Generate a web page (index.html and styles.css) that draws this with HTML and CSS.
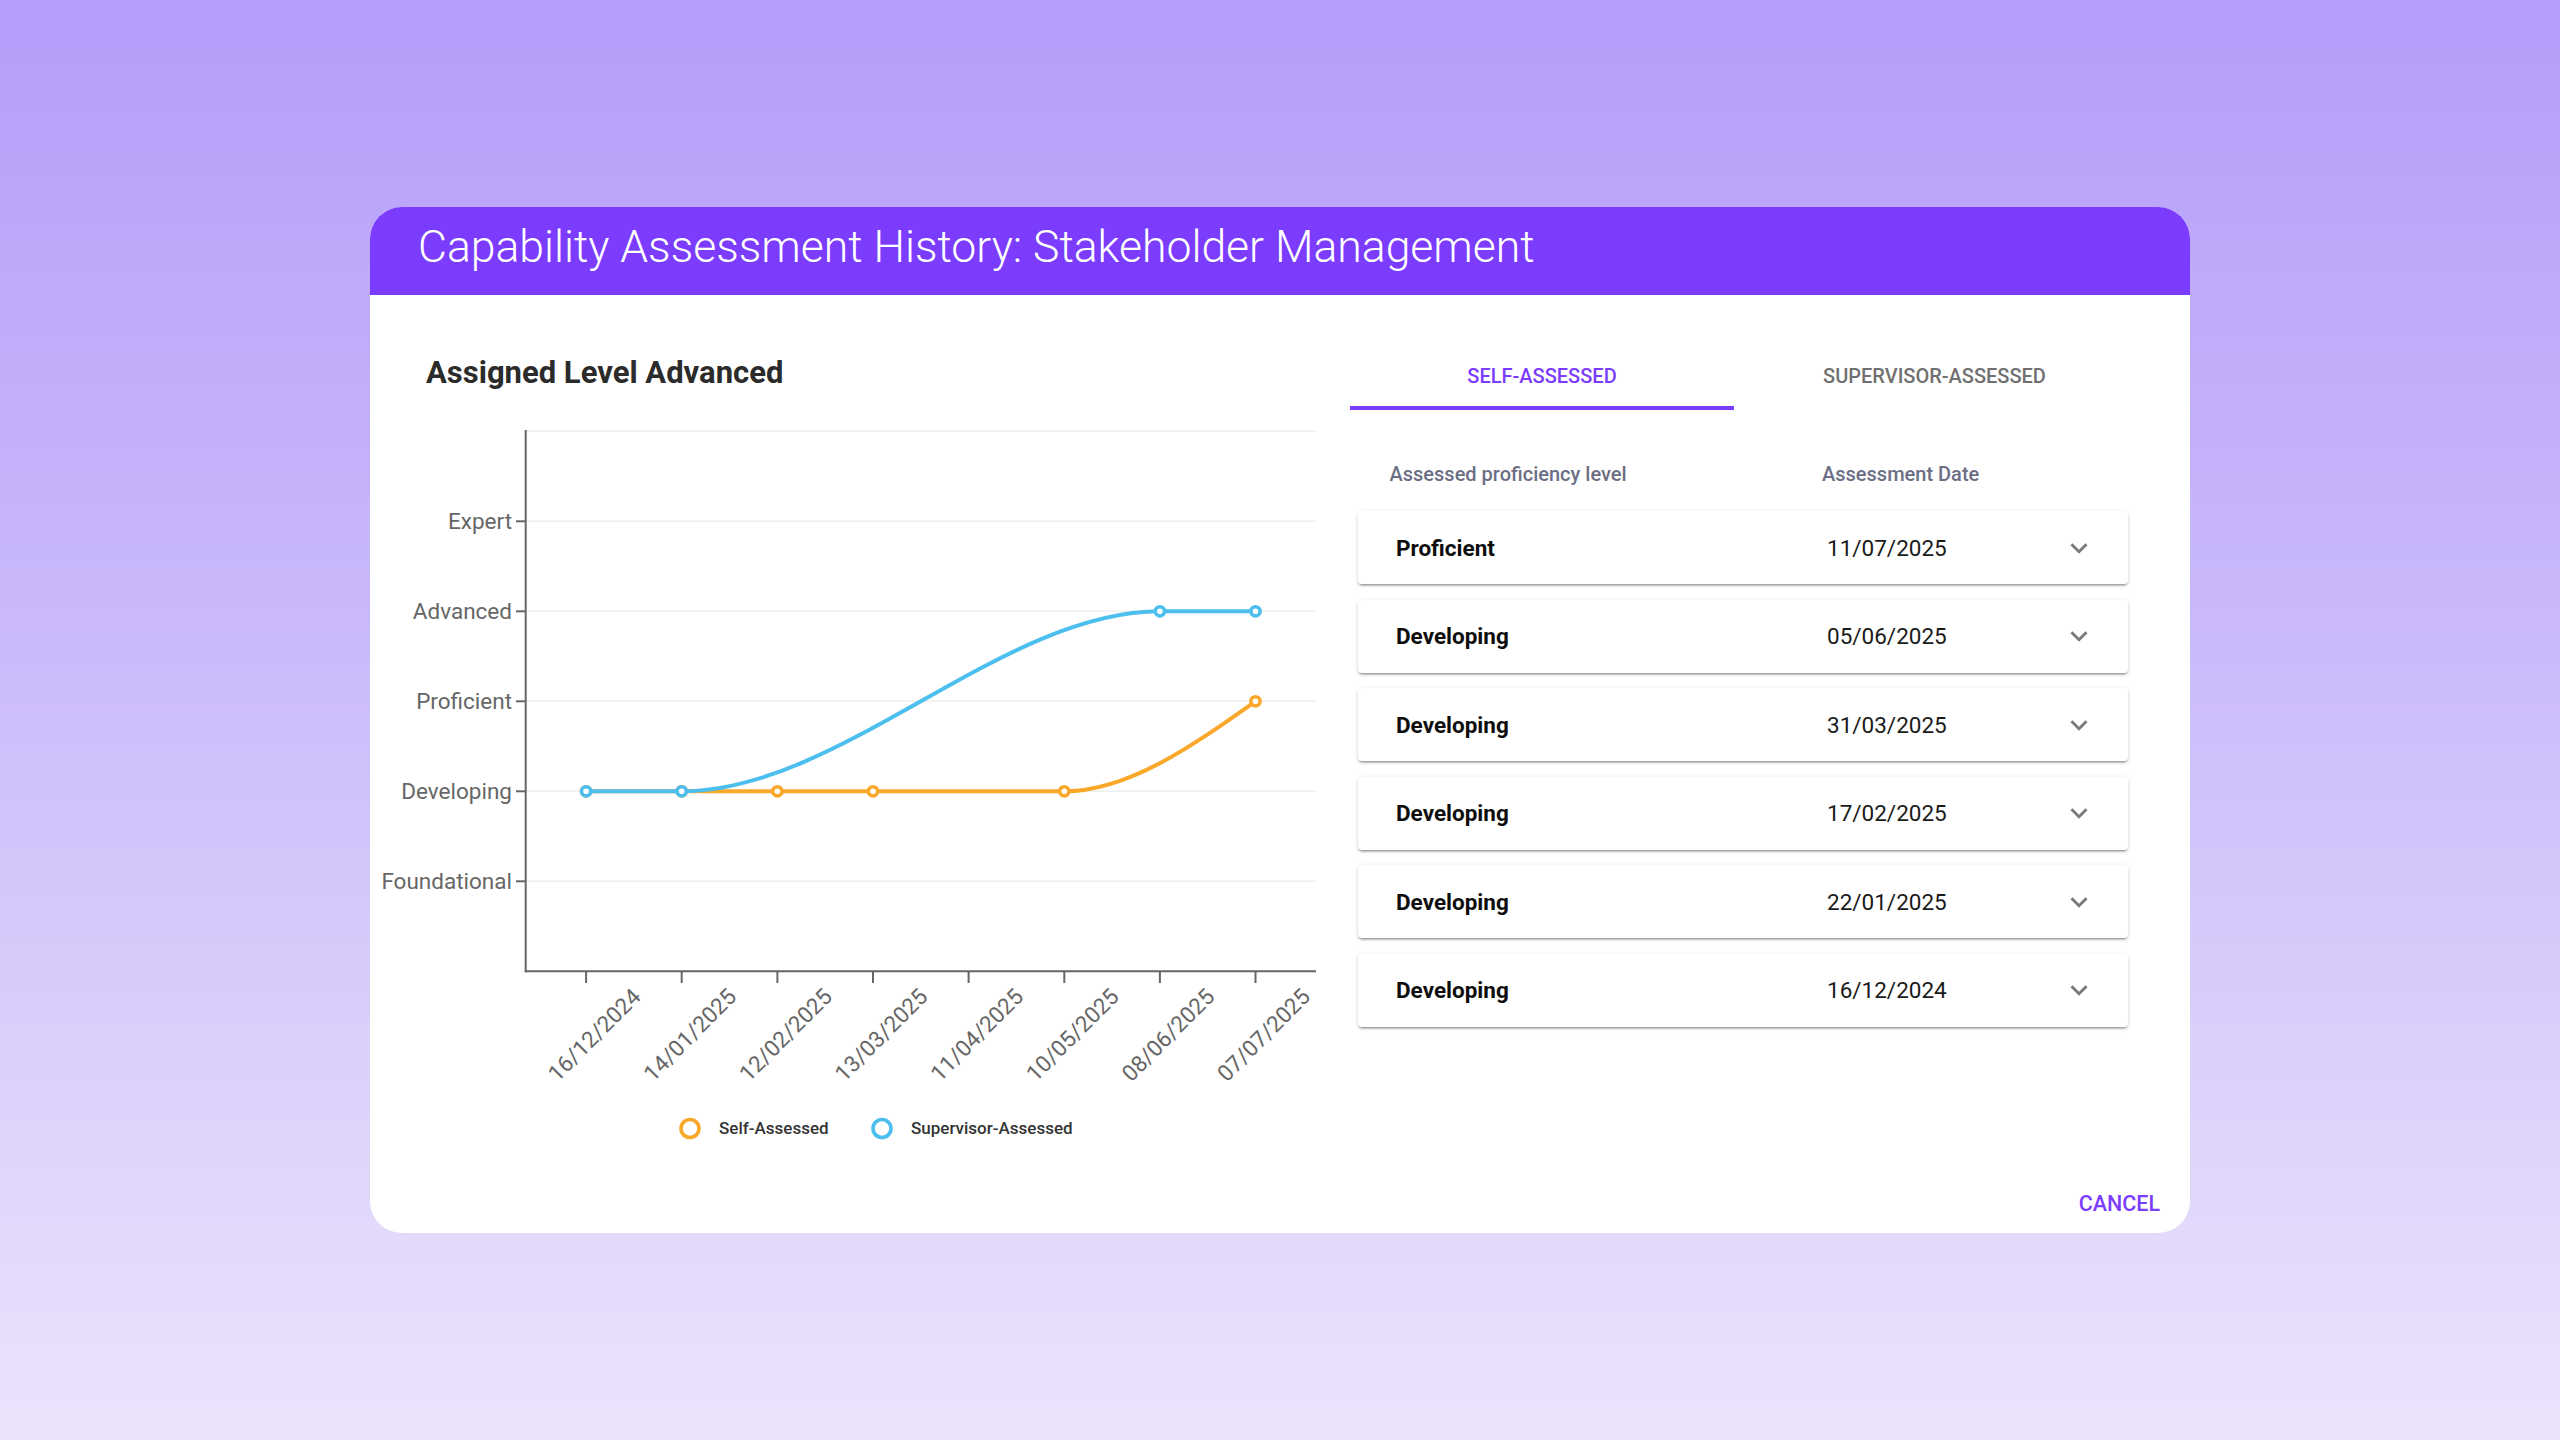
FILE: index.html
```html
<!DOCTYPE html>
<html lang="en">
<head>
<meta charset="utf-8">
<title>Capability Assessment History</title>
<link rel="stylesheet" href="styles.css">
</head>
<body>
<div class="dialog">
  <div class="dialog-header">
    <h1 class="dialog-title">Capability Assessment History: Stakeholder Management</h1>
  </div>
  <div class="dialog-body">
    <section class="chart-col">
      <h2 class="chart-title">Assigned Level Advanced</h2>
      <svg class="chart" width="960" height="760" viewBox="370 400 960 760" xmlns="http://www.w3.org/2000/svg">
        <g class="grid">
          <line x1="526" y1="429.3" x2="1316" y2="429.3"/>
          <line x1="526" y1="519.3" x2="1316" y2="519.3"/>
          <line x1="526" y1="609.3" x2="1316" y2="609.3"/>
          <line x1="526" y1="699.3" x2="1316" y2="699.3"/>
          <line x1="526" y1="789.3" x2="1316" y2="789.3"/>
          <line x1="526" y1="879.3" x2="1316" y2="879.3"/>
        </g>
        <g class="axis">
          <line x1="525.7" y1="428" x2="525.7" y2="970.3"/>
          <line x1="524.7" y1="969.3" x2="1316" y2="969.3"/>
          <line x1="516" y1="519.3" x2="525.7" y2="519.3"/>
          <line x1="516" y1="609.3" x2="525.7" y2="609.3"/>
          <line x1="516" y1="699.3" x2="525.7" y2="699.3"/>
          <line x1="516" y1="789.3" x2="525.7" y2="789.3"/>
          <line x1="516" y1="879.3" x2="525.7" y2="879.3"/>
          <line x1="586.1" y1="969.3" x2="586.1" y2="981"/>
          <line x1="681.7" y1="969.3" x2="681.7" y2="981"/>
          <line x1="777.4" y1="969.3" x2="777.4" y2="981"/>
          <line x1="873.0" y1="969.3" x2="873.0" y2="981"/>
          <line x1="968.6" y1="969.3" x2="968.6" y2="981"/>
          <line x1="1064.3" y1="969.3" x2="1064.3" y2="981"/>
          <line x1="1159.9" y1="969.3" x2="1159.9" y2="981"/>
          <line x1="1255.5" y1="969.3" x2="1255.5" y2="981"/>
        </g>
        <g class="y-labels">
          <text x="512" y="519.3" dy="0.35em">Expert</text>
          <text x="512" y="609.3" dy="0.35em">Advanced</text>
          <text x="512" y="699.3" dy="0.35em">Proficient</text>
          <text x="512" y="789.3" dy="0.35em">Developing</text>
          <text x="512" y="879.3" dy="0.35em">Foundational</text>
        </g>
        <g class="x-labels">
          <text x="642.1" y="996" transform="rotate(-45 642.1 996)">16/12/2024</text>
          <text x="737.7" y="996" transform="rotate(-45 737.7 996)">14/01/2025</text>
          <text x="833.4" y="996" transform="rotate(-45 833.4 996)">12/02/2025</text>
          <text x="929.0" y="996" transform="rotate(-45 929.0 996)">13/03/2025</text>
          <text x="1024.6" y="996" transform="rotate(-45 1024.6 996)">11/04/2025</text>
          <text x="1120.3" y="996" transform="rotate(-45 1120.3 996)">10/05/2025</text>
          <text x="1215.9" y="996" transform="rotate(-45 1215.9 996)">08/06/2025</text>
          <text x="1311.5" y="996" transform="rotate(-45 1311.5 996)">07/07/2025</text>
        </g>
        <path class="line self" d="M586.1 789.3 L681.7 789.3 L777.4 789.3 L873.0 789.3 L1064.3 789.3 C1128.0 789.3 1191.8 744.3 1255.5 699.3"/>
        <g class="dots self">
          <circle cx="586.1" cy="789.3" r="4.6"/>
          <circle cx="681.7" cy="789.3" r="4.6"/>
          <circle cx="777.4" cy="789.3" r="4.6"/>
          <circle cx="873.0" cy="789.3" r="4.6"/>
          <circle cx="1064.3" cy="789.3" r="4.6"/>
          <circle cx="1255.5" cy="699.3" r="4.6"/>
        </g>
        <path class="line sup" d="M586.1 789.3 L681.7 789.3 C840.4 789.3 1001.2 609.3 1159.9 609.3 L1255.5 609.3"/>
        <g class="dots sup">
          <circle cx="586.1" cy="789.3" r="4.6"/>
          <circle cx="681.7" cy="789.3" r="4.6"/>
          <circle cx="1159.9" cy="609.3" r="4.6"/>
          <circle cx="1255.5" cy="609.3" r="4.6"/>
        </g>
        <g class="legend">
          <circle class="lg-self" cx="690" cy="1126.5" r="9"/>
          <text x="719" y="1126.5" dy="0.35em">Self-Assessed</text>
          <circle class="lg-sup" cx="882" cy="1126.5" r="9"/>
          <text x="911" y="1126.5" dy="0.35em">Supervisor-Assessed</text>
        </g>
      </svg>
    </section>
    <section class="table-col">
      <div class="tabs">
        <div class="tab active">SELF-ASSESSED</div>
        <div class="tab tab-wide">SUPERVISOR-ASSESSED</div>
      </div>
      <div class="table-head">
        <span>Assessed proficiency level</span>
        <span>Assessment Date</span>
      </div>
      <div class="rows">
        <div class="row"><span class="level">Proficient</span><span class="date">11/07/2025</span><svg class="chev" viewBox="0 0 24 24"><path d="M16.59 8.59 12 13.17 7.41 8.59 6 10l6 6 6-6z"/></svg></div>
        <div class="row"><span class="level">Developing</span><span class="date">05/06/2025</span><svg class="chev" viewBox="0 0 24 24"><path d="M16.59 8.59 12 13.17 7.41 8.59 6 10l6 6 6-6z"/></svg></div>
        <div class="row"><span class="level">Developing</span><span class="date">31/03/2025</span><svg class="chev" viewBox="0 0 24 24"><path d="M16.59 8.59 12 13.17 7.41 8.59 6 10l6 6 6-6z"/></svg></div>
        <div class="row"><span class="level">Developing</span><span class="date">17/02/2025</span><svg class="chev" viewBox="0 0 24 24"><path d="M16.59 8.59 12 13.17 7.41 8.59 6 10l6 6 6-6z"/></svg></div>
        <div class="row"><span class="level">Developing</span><span class="date">22/01/2025</span><svg class="chev" viewBox="0 0 24 24"><path d="M16.59 8.59 12 13.17 7.41 8.59 6 10l6 6 6-6z"/></svg></div>
        <div class="row"><span class="level">Developing</span><span class="date">16/12/2024</span><svg class="chev" viewBox="0 0 24 24"><path d="M16.59 8.59 12 13.17 7.41 8.59 6 10l6 6 6-6z"/></svg></div>
      </div>
    </section>
  </div>
  <div class="dialog-footer">
    <button class="cancel" type="button">CANCEL</button>
  </div>
</div>
</body>
</html>
```
FILE: styles.css
```css
html, body {
  margin: 0;
  padding: 0;
}
body {
  min-height: 100vh;
  display: flex;
  align-items: center;
  justify-content: center;
  background: linear-gradient(180deg, #b59dfa 0%, #cbbafa 45%, #ebe4fc 100%);
  font-family: Roboto, "Noto Sans", "Liberation Sans", sans-serif;
}
.dialog {
  width: 1820px;
  height: 1026px;
  background: #ffffff;
  border-radius: 32px;
  overflow: hidden;
  display: flex;
  flex-direction: column;
}
.dialog-header {
  height: 88px;
  flex: 0 0 88px;
  background: #7b3cfd;
  display: flex;
  align-items: center;
  padding: 0 48px 8px;
  box-sizing: border-box;
}
.dialog-title {
  margin: 0;
  font-size: 44.5px;
  font-weight: 300;
  color: #ffffff;
  line-height: 1.1;
  letter-spacing: 0;
}
.dialog-body {
  flex: 1;
  display: flex;
}
.chart-col {
  width: 980px;
  flex: 0 0 980px;
}
.chart-title {
  margin: 0;
  padding: 60px 0 0 56px;
  font-size: 31px;
  line-height: 36px;
  font-weight: 700;
  color: #2b2b2b;
}
.chart {
  display: block;
  margin-top: 10.5px;
  overflow: visible;
}
.grid line {
  stroke: #eeeeee;
  stroke-width: 1.5;
}
.axis line {
  stroke: #666666;
  stroke-width: 2;
}
.y-labels text {
  font-family: Roboto, sans-serif;
  font-size: 22.5px;
  fill: #666666;
  text-anchor: end;
}
.x-labels text {
  font-family: Roboto, sans-serif;
  font-size: 22.5px;
  fill: #666666;
  text-anchor: end;
}
.line {
  fill: none;
  stroke-width: 4;
  stroke-linecap: round;
  stroke-linejoin: round;
}
.line.self { stroke: #f9a82b; }
.line.sup { stroke: #4dbfee; }
.dots circle {
  fill: #ffffff;
  stroke-width: 3.6;
}
.dots.self circle { stroke: #f9a82b; }
.dots.sup circle { stroke: #4dbfee; }
.legend circle {
  fill: none;
  stroke-width: 3.6;
}
.legend .lg-self { stroke: #f9a82b; }
.legend .lg-sup { stroke: #4dbfee; }
.legend text {
  font-family: Roboto, sans-serif;
  font-size: 17px;
  font-weight: 500;
  fill: #333333;
}
.table-col {
  flex: 1;
  padding-top: 40px;
}
.tabs {
  display: flex;
  height: 75px;
}
.tab {
  width: 384px;
  height: 75px;
  box-sizing: border-box;
  padding-top: 29px;
  text-align: center;
  font-size: 20px;
  line-height: 24px;
  font-weight: 500;
  color: #707070;
}
.tab-wide {
  width: 401px;
}
.tab.active {
  color: #7b3cfd;
  border-bottom: 4px solid #7b3cfd;
}
.table-head {
  display: grid;
  grid-template-columns: 432.5px 1fr;
  padding-left: 39.5px;
  margin-top: 51.5px;
  margin-bottom: 25.5px;
  font-size: 20px;
  line-height: 24px;
  font-weight: 500;
  color: #6b6e84;
}
.rows {
  display: flex;
  flex-direction: column;
  gap: 15.6px;
  margin-left: 8px;
  width: 770px;
}
.row {
  height: 73px;
  box-sizing: border-box;
  display: grid;
  grid-template-columns: 431px 1fr 34px;
  align-items: center;
  padding: 0 32px 0 38px;
  background: #ffffff;
  border-radius: 4px;
  box-shadow: 0 3px 2px -2px rgba(0, 0, 0, 0.28), 0 2px 2px 0 rgba(0, 0, 0, 0.14), 0 1px 5px 0 rgba(0, 0, 0, 0.12);
  font-size: 22.5px;
  color: #0d0d0d;
}
.level {
  font-weight: 700;
}
.date {
  font-weight: 400;
  color: #1a1a1a;
}
.chev {
  width: 34px;
  height: 34px;
  fill: #7a7a7a;
}
.dialog-footer {
  height: 60px;
  flex: 0 0 60px;
  display: flex;
  justify-content: flex-end;
  align-items: center;
  padding-right: 30px;
}
.cancel {
  border: none;
  background: none;
  padding: 0;
  font-family: Roboto, sans-serif;
  font-size: 21.5px;
  font-weight: 500;
  color: #7b3cfd;
  cursor: pointer;
}
```
